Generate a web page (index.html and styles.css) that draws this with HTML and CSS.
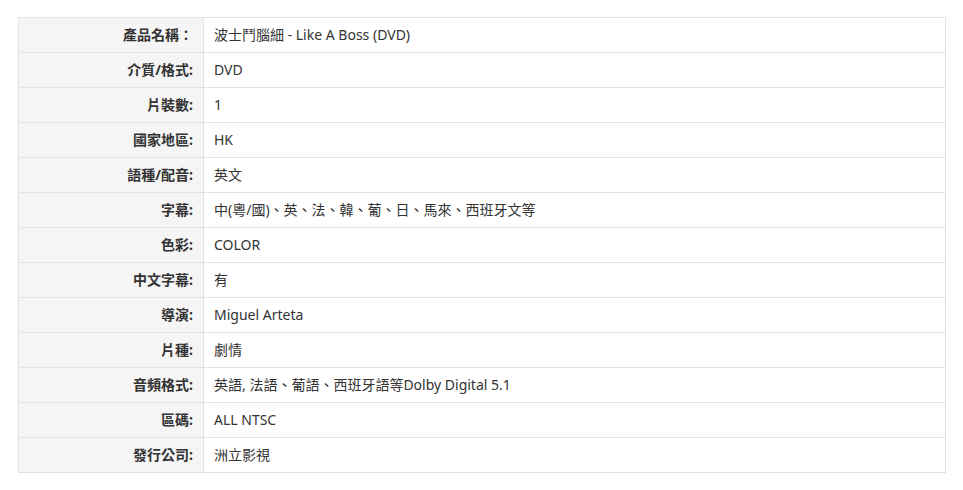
FILE: index.html
```html
<!DOCTYPE html>
<html lang="zh-Hant">

<head>
  <meta charset="UTF-8" />
  <meta name="viewport" content="width=device-width, initial-scale=1.0" />
  <title>產品資料</title>
  <link rel="stylesheet" href="styles.css">
</head>

<body>
  <div class="spec-wrap">
    <table class="spec-table">
      <tr><th>產品名稱：</th><td>波士鬥腦細 - Like A Boss (DVD)</td></tr>
      <tr><th>介質/格式:</th><td>DVD</td></tr>
      <tr><th>片裝數:</th><td>1</td></tr>
      <tr><th>國家地區:</th><td>HK</td></tr>
      <tr><th>語種/配音:</th><td>英文</td></tr>
      <tr><th>字幕:</th><td>中(粵/國)、英、法、韓、葡、日、馬來、西班牙文等</td></tr>
      <tr><th>色彩:</th><td>COLOR</td></tr>
      <tr><th>中文字幕:</th><td>有</td></tr>
      <tr><th>導演:</th><td>Miguel Arteta</td></tr>
      <tr><th>片種:</th><td>劇情</td></tr>
      <tr><th>音頻格式:</th><td>英語, 法語、葡語、西班牙語等Dolby Digital 5.1</td></tr>
      <tr><th>區碼:</th><td>ALL NTSC</td></tr>
      <tr><th>發行公司:</th><td>洲立影視</td></tr>
    </table>
  </div>
</body>

</html>
```

FILE: styles.css
```css
body {
  margin: 0;
  background: #fff;
  font-family: "Noto Sans", "Noto Sans CJK TC", sans-serif;
  font-size: 14px;
  color: #333;
}

.spec-wrap {
  padding: 17px 17px 0 18px;
}

.spec-table {
  width: 928px;
  border-collapse: collapse;
  border: 1px solid #e3e3e3;
}

.spec-table th,
.spec-table td {
  height: 34px;
  padding: 0 10px;
  border: 1px solid #e3e3e3;
  line-height: 20px;
  vertical-align: middle;
}

.spec-table th {
  width: 164px;
  background-color: #f5f5f5;
  text-align: right;
  font-weight: bold;
  color: #333;
}

.spec-table td {
  text-align: left;
  font-weight: normal;
}
```
